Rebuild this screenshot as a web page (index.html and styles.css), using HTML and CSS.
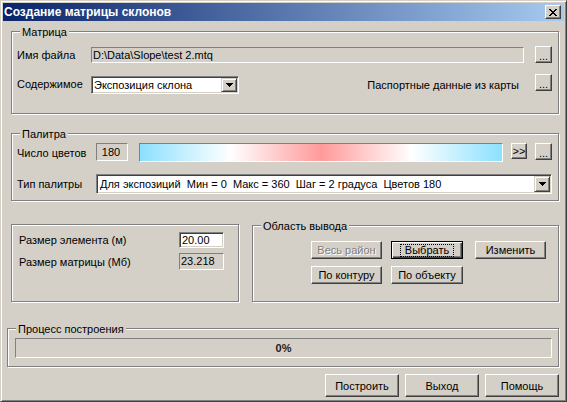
FILE: index.html
```html
<!DOCTYPE html>
<html lang="ru">
<head>
<meta charset="utf-8">
<title>Создание матрицы склонов</title>
<link rel="stylesheet" href="styles.css">
</head>
<body>
<div class="window">
  <div class="titlebar">
    <span class="title">Создание матрицы склонов</span>
    <div class="close">
      <svg width="8" height="7" viewBox="0 0 8 7" shape-rendering="crispEdges"><path fill="#000" d="M0 0h2v1h-2z M6 0h2v1h-2z M1 1h2v1h-2z M5 1h2v1h-2z M2 2h4v1h-4z M3 3h2v1h-2z M2 4h4v1h-4z M1 5h2v1h-2z M5 5h2v1h-2z M0 6h2v1h-2z M6 6h2v1h-2z"/></svg>
    </div>
  </div>

  <div class="group g-matrix">
    <span class="legend">Матрица</span>
    <div class="row r-file">
      <span class="lbl lbl-74">Имя файла</span>
      <div class="static field-file">D:\Data\Slope\test 2.mtq</div>
      <div class="btn dots">...</div>
    </div>
    <div class="row r-content">
      <span class="lbl lbl-74 lbl-top">Содержимое</span>
      <div class="combo combo-content">
        <span class="combo-text">Экспозиция склона</span>
        <span class="drop"><svg width="7" height="4" viewBox="0 0 7 4" shape-rendering="crispEdges"><path fill="#000" d="M0 0h7v1h-1v1h-1v1h-1v1h-1v-1h-1v-1h-1v-1h-1z"/></svg></span>
      </div>
      <span class="passport">Паспортные данные из карты</span>
      <div class="btn dots">...</div>
    </div>
  </div>

  <div class="group g-palette">
    <span class="legend">Палитра</span>
    <div class="row r-count">
      <span class="lbl lbl-79 lbl-top">Число цветов</span>
      <div class="static box-count">180</div>
      <div class="static gradient"></div>
      <div class="btn more">&gt;&gt;</div>
      <div class="btn dots">...</div>
    </div>
    <div class="row r-type">
      <span class="lbl lbl-79">Тип палитры</span>
      <div class="combo combo-type">
        <span class="combo-text">Для экспозиций  Мин = 0  Макс = 360  Шаг = 2 градуса  Цветов 180</span>
        <span class="drop"><svg width="7" height="4" viewBox="0 0 7 4" shape-rendering="crispEdges"><path fill="#000" d="M0 0h7v1h-1v1h-1v1h-1v1h-1v-1h-1v-1h-1v-1h-1z"/></svg></span>
      </div>
    </div>
  </div>

  <div class="bottom">
    <div class="group g-size">
      <div class="row r-elem">
        <span class="lbl lbl-160">Размер элемента (м)</span>
        <div class="edit">20.00</div>
      </div>
      <div class="row r-mat">
        <span class="lbl lbl-160">Размер матрицы (Мб)</span>
        <div class="static box-mat">23.218</div>
      </div>
    </div>
    <div class="group g-area">
      <span class="legend">Область вывода</span>
      <div class="row r-b1">
        <div class="btn area disabled">Весь район</div>
        <div class="btn area wide default gap9"><span class="focus">Выбрать</span></div>
        <div class="btn area gap12">Изменить</div>
      </div>
      <div class="row r-b2">
        <div class="btn area">По контуру</div>
        <div class="btn area wide gap9">По объекту</div>
      </div>
    </div>
  </div>

  <div class="group g-process">
    <span class="legend">Процесс построения</span>
    <div class="static progress">0%</div>
  </div>

  <div class="actions">
    <div class="btn action">Построить</div>
    <div class="btn action">Выход</div>
    <div class="btn action">Помощь</div>
  </div>
</div>
</body>
</html>
```

FILE: styles.css
```css
* { box-sizing: border-box; }

body {
  margin: 0;
  background: #d4d0c8;
  font-family: "Liberation Sans", Arial, sans-serif;
  font-size: 11px;
  color: #000;
}

.window {
  width: 567px;
  height: 402px;
  padding: 2px;
  background: #d4d0c8;
  border: 1px solid;
  border-color: #d4d0c8 #404040 #404040 #d4d0c8;
  box-shadow: inset 1px 1px #fff, inset -1px -1px #808080;
}

.titlebar {
  height: 18px;
  display: flex;
  align-items: center;
  justify-content: space-between;
  padding: 0 3px 0 1px;
  background: linear-gradient(to right, #0a246a, #a6caf0);
}

.title {
  color: #fff;
  font-weight: bold;
  font-size: 12px;
  line-height: 14px;
}

.close {
  width: 16px;
  height: 14px;
  display: flex;
  align-items: center;
  justify-content: center;
  background: #d4d0c8;
  border: 1px solid;
  border-color: #fff #404040 #404040 #fff;
  box-shadow: inset -1px -1px #808080;
}

/* etched group box */
.group {
  position: relative;
  border: 1px solid #808080;
  box-shadow: inset 1px 1px #fff, 1px 1px #fff;
}

.legend {
  position: absolute;
  top: -6px;
  left: 8px;
  padding: 0 2px;
  line-height: 13px;
  background: #d4d0c8;
  white-space: nowrap;
}

.row { display: flex; }

.lbl {
  flex: none;
  white-space: nowrap;
  line-height: 14px;
}
.lbl-top { line-height: 18px; margin-top: 1px; }
.lbl-74 { width: 74px; }
.lbl-79 { width: 79px; }
.lbl-160 { width: 160px; }

/* 1px sunken static edge */
.static {
  flex: none;
  border: 1px solid;
  border-color: #808080 #fff #fff #808080;
  background: #d4d0c8;
  white-space: nowrap;
}

/* raised push button */
.btn {
  flex: none;
  display: flex;
  align-items: center;
  justify-content: center;
  background: #d4d0c8;
  border: 1px solid;
  border-color: #fff #404040 #404040 #fff;
  box-shadow: inset -1px -1px #808080;
  white-space: nowrap;
}

.dots {
  width: 17px;
  height: 17px;
  line-height: 12px;
  padding-top: 2px;
}

/* Матрица */
.g-matrix {
  margin: 10px 0 0 8px;
  width: 548px;
  height: 83px;
  padding: 0 6px 0 5px;
}

.r-file {
  margin-top: 14px;
  height: 17px;
  align-items: center;
}

.field-file {
  width: 433px;
  height: 16px;
  margin-right: 11px;
  padding-left: 1px;
  line-height: 14px;
}

.r-content {
  margin-top: 11px;
  height: 20px;
  align-items: flex-start;
}

.combo {
  flex: none;
  display: flex;
  background: #fff;
  border: 1px solid;
  border-color: #808080 #fff #fff #808080;
  box-shadow: inset 1px 1px #404040, inset -1px -1px #d4d0c8;
  padding: 1px;
}

.combo-text {
  flex: 1;
  padding-left: 1px;
  white-space: pre;
  overflow: hidden;
}

.drop {
  flex: none;
  width: 16px;
  display: flex;
  align-items: center;
  justify-content: center;
  background: #d4d0c8;
  border: 1px solid;
  border-color: #d4d0c8 #404040 #404040 #d4d0c8;
  box-shadow: inset 1px 1px #fff, inset -1px -1px #808080;
}

.combo-content {
  width: 148px;
  height: 18px;
  margin-top: 2px;
}
.combo-content .combo-text { line-height: 14px; }

.passport {
  margin-left: auto;
  margin-right: 16px;
  margin-top: 2px;
  line-height: 18px;
  white-space: nowrap;
}

/* Палитра */
.g-palette {
  margin: 19px 0 0 8px;
  width: 548px;
  height: 68px;
  padding: 0 6px 0 5px;
}

.r-count {
  margin-top: 9px;
  height: 19px;
  align-items: flex-start;
}

.box-count {
  width: 32px;
  height: 18px;
  margin-right: 11px;
  text-align: center;
  line-height: 16px;
  padding-right: 2px;
}

.gradient {
  width: 364px;
  height: 19px;
  margin-right: 8px;
  background: linear-gradient(to right, #8ce0ff 0%, #ffffff 25%, #ff9a9a 50%, #ffffff 75%, #8ce0ff 100%);
}

.more {
  width: 16px;
  height: 16px;
  margin-right: 8px;
  line-height: 12px;
}

.r-type {
  margin-top: 12px;
  height: 20px;
  align-items: center;
}

.combo-type {
  width: 456px;
  height: 20px;
}
.combo-type .combo-text { line-height: 16px; padding-left: 2px; }

/* нижний ряд */
.bottom {
  display: flex;
  margin: 23px 0 0 8px;
}

.g-size {
  width: 228px;
  height: 78px;
  padding-left: 7px;
}

.r-elem {
  margin-top: 7px;
  height: 16px;
  align-items: center;
}

.edit {
  flex: none;
  width: 45px;
  height: 16px;
  background: #fff;
  border: 1px solid;
  border-color: #808080 #fff #fff #808080;
  box-shadow: inset 1px 1px #404040, inset -1px -1px #d4d0c8;
  padding-left: 2px;
  line-height: 14px;
}

.r-mat {
  margin-top: 5px;
  height: 17px;
  align-items: center;
}

.box-mat {
  width: 45px;
  height: 17px;
  padding-left: 1px;
  line-height: 15px;
}

.g-area {
  width: 307px;
  height: 77px;
  margin: 1px 0 0 13px;
  padding-left: 58px;
}

.r-b1 { margin-top: 15px; }
.r-b2 { margin-top: 7px; }

.area {
  width: 71px;
  height: 18px;
}
.area.wide { width: 72px; }
.gap9 { margin-left: 9px; }
.gap12 { margin-left: 12px; }

.disabled {
  color: #808080;
  text-shadow: 1px 1px #fff;
}

.default {
  position: relative;
  border-color: #000;
  box-shadow: inset 1px 1px #fff, inset -1px -1px #404040, inset -2px -2px #808080;
}

.focus {
  padding: 0 4px;
  line-height: 11px;
  outline: 1px dotted #000;
  outline-offset: 0;
}

/* Процесс построения */
.g-process {
  margin: 26px 0 0 4px;
  width: 552px;
  height: 39px;
}

.progress {
  margin: 9px 0 0 7px;
  width: 537px;
  height: 20px;
  text-align: center;
  font-weight: bold;
  line-height: 18px;
  color: #202020;
}

.actions {
  display: flex;
  justify-content: flex-end;
  gap: 6px;
  margin-top: 7px;
  padding-right: 5px;
}

.action {
  width: 74px;
  height: 23px;
}
```
